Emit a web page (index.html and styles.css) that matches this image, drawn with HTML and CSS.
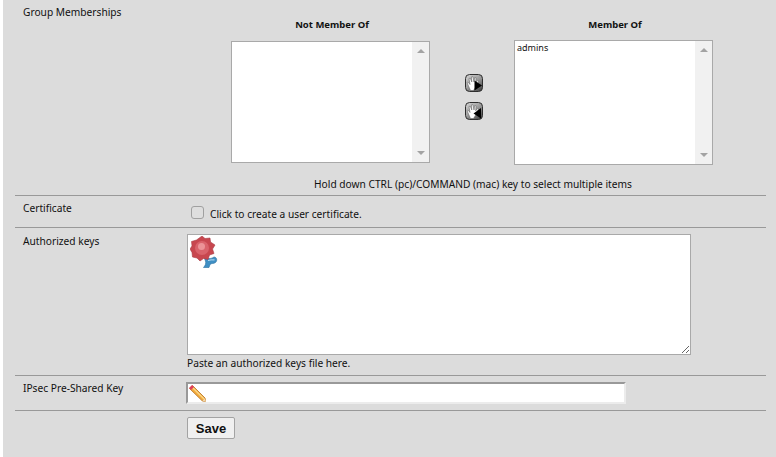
FILE: index.html
```html
<!DOCTYPE html>
<html lang="en">
<head>
<meta charset="utf-8">
<title>User</title>
<link rel="stylesheet" href="styles.css">
</head>
<body>
<svg class="defs" width="0" height="0" aria-hidden="true">
  <defs>
    <linearGradient id="moverFill" x1="0" y1="0" x2="0.800" y2="1">
      <stop offset="0" stop-color="#d8d8d8"/>
      <stop offset="0.550" stop-color="#9a9a9a"/>
      <stop offset="1" stop-color="#4a4a4a"/>
    </linearGradient>
    <symbol id="hand" viewBox="0 0 18 18">
      <rect x="0.500" y="0.500" width="17" height="17" rx="4" fill="url(#moverFill)" stroke="#2e2e2e"/>
      <path d="M2 8.500l1-.5 2 2.500L4 4.500l1.300-.3L6.800 8 6.500 2.800l1.400-.1L9 8l.7-4.500 1.300.3-.3 5 2-2.300 1 .7-3 5.800-2.200 3.500H5.500z" fill="#fff" stroke="#555" stroke-width=".5"/>
    </symbol>
  </defs>
</svg>
<main class="page">
  <section class="row row-groups">
    <div class="label">Group Memberships</div>
    <div class="groups">
      <div class="lists">
        <div class="list-col list-col-left">
          <h3 class="list-title">Not Member Of</h3>
          <div class="listbox listbox-left">
            <div class="list-items"></div>
            <div class="track"><i class="tri tri-up"></i><i class="tri tri-down"></i></div>
          </div>
        </div>
        <div class="movers">
          <svg class="mover" viewBox="0 0 18 18" width="18" height="18"><use href="#hand"/><path d="M9.500 6.500L17 11.500 9.500 16.500z" fill="#000"/></svg>
          <svg class="mover" viewBox="0 0 18 18" width="18" height="18"><use href="#hand"/><path d="M16 6v10.500L8.500 11.500z" fill="#000"/></svg>
        </div>
        <div class="list-col">
          <h3 class="list-title">Member Of</h3>
          <div class="listbox listbox-right">
            <div class="list-items">admins</div>
            <div class="track"><i class="tri tri-up"></i><i class="tri tri-down"></i></div>
          </div>
        </div>
      </div>
      <p class="groups-hint">Hold down CTRL (pc)/COMMAND (mac) key to select multiple items</p>
    </div>
  </section>

  <section class="row row-cert">
    <div class="label">Certificate</div>
    <label class="cert"><input class="check" type="checkbox"><span class="cert-text">Click to create a user certificate.</span></label>
  </section>

  <section class="row row-keys">
    <div class="label">Authorized keys</div>
    <div class="keys">
      <div class="area-wrap">
        <textarea class="area" aria-label="Authorized keys"></textarea>
        <svg class="seal" viewBox="0 0 28 32" width="28" height="32">
          <path d="M14 21c4 2 7 2 10 0 3 0 3.500 4 1.500 5.500-2 1.500-4 .5-5.500 2L19 31.500h-5.500c1.800-2 2.700-4 2-6.500z" fill="#3f8fc4" stroke="#2a6f9f" stroke-width=".6"/>
          <path d="M18 24.500c2-.6 4-.8 6.500-.6" fill="none" stroke="#bfe0f2" stroke-width="1"/>
          <path d="M12 0l3 2.500 5-.5.500 4 4.500 3-2.500 4 1.500 4.500-4.500 1.500-1.500 4.500-4.500-1-3.500 2.500-3-3-4.500-1-.5-4.500L0 13l2-3L1.500 5.500 6.500 4z" fill="#c8474f" stroke="#a83a43" stroke-width=".6"/>
          <circle cx="12" cy="12" r="7" fill="#d9636b"/>
          <circle cx="11.500" cy="10.500" r="3.500" fill="#ec9397"/>
        </svg>
      </div>
      <p class="keys-hint">Paste an authorized keys file here.</p>
    </div>
  </section>

  <section class="row row-psk">
    <div class="label">IPsec Pre-Shared Key</div>
    <div class="psk-wrap">
      <input class="psk" type="text" aria-label="IPsec Pre-Shared Key">
      <svg class="pencil" viewBox="0 0 18 18" width="18" height="18">
        <path d="M1.500 4.500L4.500 1.500 17 14l1 3.800-3.800-1z" fill="#f2a93b" stroke="#b5701f" stroke-width=".8"/>
        <path d="M4.500 3.500L16 15" stroke="#fbd98a" stroke-width="1.200" fill="none"/>
        <path d="M1 4L4 1l2 2-3 3z" fill="#e0405a"/>
        <path d="M14.500 16.800l2.500-2.500 1 3.700z" fill="#f3d9b0"/>
      </svg>
    </div>
  </section>

  <section class="row-save">
    <button class="save" type="button">Save</button>
  </section>
</main>
</body>
</html>
```

FILE: styles.css
```css
* { box-sizing: border-box; }

html, body {
  margin: 0;
  background: #fff;
}

body {
  font-family: "Noto Sans", sans-serif;
  font-size: 10.200px;
  color: #111;
}

.defs {
  position: absolute;
}

.page {
  margin-left: 3px;
  height: 457px;
  background: #dcdcdc;
  padding: 0 10px 0 12px;
  overflow: hidden;
}

.row {
  display: flex;
  border-bottom: 1px solid #999;
}

.label {
  width: 172px;
  flex: none;
  padding-left: 8px;
  line-height: 13px;
}

.row-groups { height: 196px; }
.row-groups .label { padding-top: 6px; }

.groups { width: 560px; }

.lists {
  display: flex;
  align-items: flex-start;
}

.list-col {
  width: 199px;
  flex: none;
}

.list-col-left { margin-left: 44px; }

.list-title {
  margin: 0;
  height: 40px;
  padding: 18px 0 0 3px;
  font-size: 9.500px;
  line-height: 13px;
  font-weight: bold;
  text-align: center;
}

.listbox {
  display: flex;
  border: 1px solid #a9a9a9;
  background: #fff;
}

.listbox-left { height: 122px; margin-top: 1px; }
.listbox-right { height: 125px; }

.list-items {
  flex: 1;
  padding: 1px 2px;
  line-height: 11px;
  font-size: 9px;
}

.track {
  width: 17px;
  background: #f1f1f1;
  display: flex;
  flex-direction: column;
  justify-content: space-between;
  align-items: center;
  padding: 7px 0;
}

.tri {
  width: 0;
  height: 0;
  border-left: 4px solid transparent;
  border-right: 4px solid transparent;
}

.tri-up { border-bottom: 4px solid #a3a3a3; }
.tri-down { border-top: 4px solid #a3a3a3; }

.movers {
  width: 84px;
  flex: none;
  display: flex;
  flex-direction: column;
  align-items: center;
  gap: 10px;
  padding: 74px 0 0 4px;
}

.mover { display: block; }

.groups-hint {
  margin: 13px 0 0;
  width: 572px;
  text-align: center;
  line-height: 13px;
}

.row-cert { height: 32px; }
.row-cert .label { padding-top: 6px; }

.cert {
  display: flex;
  align-items: flex-end;
  padding: 9px 0 0 4px;
  height: 24px;
}

.cert-text { position: relative; top: 1px; }

.check {
  appearance: none;
  -webkit-appearance: none;
  width: 13px;
  height: 13px;
  margin: 0 6px 1px 0;
  background: #dedede;
  border: 1px solid #a0a0a0;
  border-radius: 3px;
}

.row-keys { height: 148px; }
.row-keys .label { padding-top: 7px; }

.keys { padding-top: 6px; }

.area-wrap {
  position: relative;
  width: 504px;
  height: 121px;
}

.area {
  display: block;
  width: 504px;
  height: 121px;
  margin: 0;
  background: #fff;
  border: 1px solid #a9a9a9;
  border-radius: 0;
  outline: 0;
}

.seal {
  position: absolute;
  left: 3px;
  top: 2px;
}

.keys-hint {
  margin: 2px 0 0;
  line-height: 13px;
}

.row-psk { height: 35px; }
.row-psk .label { padding-top: 6px; }

.psk-wrap {
  position: relative;
  margin: 6px 0 0 -1px;
}

.psk {
  display: block;
  width: 440px;
  height: 22px;
  margin: 0;
  padding: 0;
  background: #fff;
  border-style: solid;
  border-width: 2px;
  border-color: #999 #ececec #ececec #999;
  border-radius: 0;
  outline: 0;
}

.pencil {
  position: absolute;
  left: 2px;
  top: 2px;
}

.row-save { padding: 6px 0 0 172px; }

.save {
  display: block;
  width: 48px;
  height: 22px;
  padding: 0;
  font-family: "Liberation Sans", Arial, sans-serif;
  font-size: 13px;
  font-weight: bold;
  color: #111;
  background: #f0f0f0;
  border: 1px solid #a3a3a3;
  border-radius: 2px;
}
```
